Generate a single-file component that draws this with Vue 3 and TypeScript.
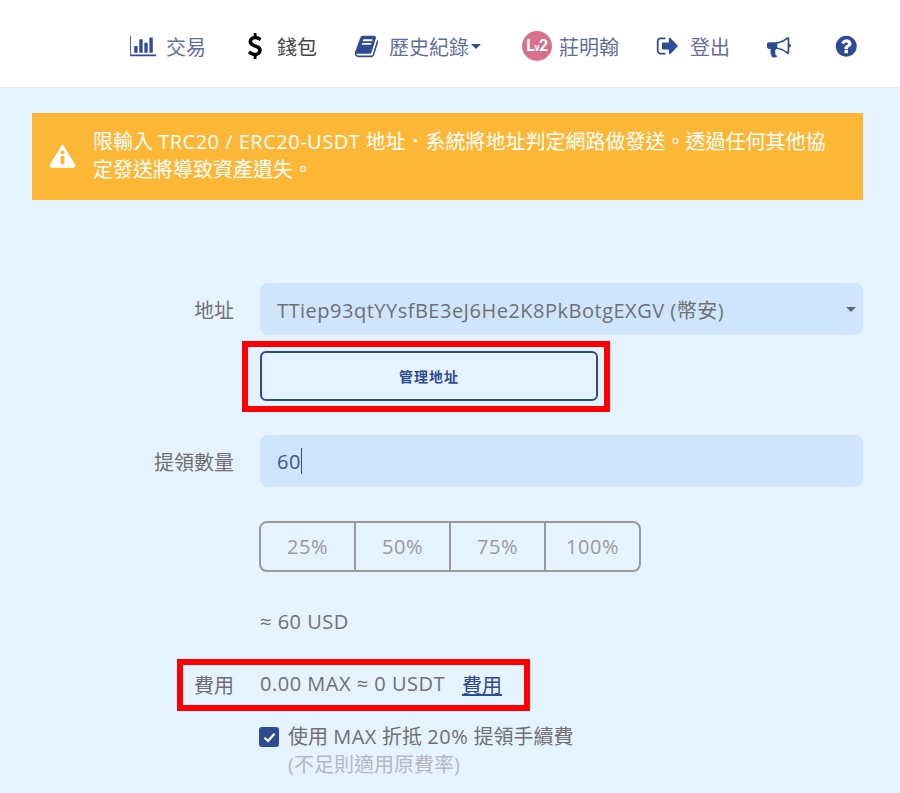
<template>
	<div class="page">
		<header class="topbar">
			<nav class="nav">
				<a class="nav-item trade">
					<svg class="ico" width="27" height="24" viewBox="0 0 2048 1792"><path :d="icons.chart"/></svg>
					<span>交易</span>
				</a>
				<a class="nav-item wallet">
					<svg class="ico" width="26" height="26" viewBox="0 0 1792 1792"><path :d="icons.dollar"/></svg>
					<span>錢包</span>
				</a>
				<a class="nav-item history">
					<svg class="ico" width="25" height="25" viewBox="0 0 1792 1792"><path :d="icons.book"/></svg>
					<span>歷史紀錄</span>
					<i class="caret"></i>
				</a>
				<a class="nav-item user">
					<span class="badge">L<small>v</small>2</span>
					<span>莊明翰</span>
				</a>
				<a class="nav-item logout">
					<svg class="ico" width="24" height="24" viewBox="0 0 1792 1792"><path :d="icons.signOut"/></svg>
					<span>登出</span>
				</a>
				<a class="nav-item horn">
					<svg class="ico" width="24" height="24" viewBox="0 0 1792 1792"><path :d="icons.bullhorn"/></svg>
				</a>
				<a class="nav-item help">
					<svg class="ico" width="24.5" height="24.5" viewBox="0 0 1792 1792"><path :d="icons.help"/></svg>
				</a>
			</nav>
		</header>

		<main class="content">
			<div class="alert">
				<svg class="alert-ico" width="27" height="24" viewBox="0 0 27 24">
					<path d="M13.5 2 L25 21 Q25.6 22.6 24 22.6 L3 22.6 Q1.4 22.6 2 21 Z" fill="#fff" stroke="#fff" stroke-width="2.4" stroke-linejoin="round"/>
					<circle cx="13.5" cy="8.6" r="2" fill="#fcb737"/>
					<rect x="11.6" y="12" width="3.8" height="8.4" fill="#fcb737"/>
				</svg>
				<p class="alert-text">限輸入 <span class="latin">TRC20 / ERC20-USDT</span> 地址．系統將地址判定網路做發送。透過任何其他協定發送將導致資產遺失。</p>
			</div>

			<form class="form" @submit.prevent>
				<div class="row">
					<label class="label">地址</label>
					<div class="field select">
						<span class="address latin">TTiep93qtYYsfBE3eJ6He2K8PkBotgEXGV (幣安)</span>
						<i class="select-caret"></i>
					</div>
				</div>
				<div class="row manage-row">
					<span></span>
					<div class="marked">
						<button class="manage-btn" type="button">管理地址</button>
						<span class="red-box box-manage"></span>
					</div>
				</div>
				<div class="row amount-row">
					<label class="label">提領數量</label>
					<div class="field amount"><span class="latin">60</span><i class="cursor"></i></div>
				</div>
				<div class="row pct-row">
					<span></span>
					<div class="pct-group">
						<button v-for="p in percents" :key="p" class="pct latin" type="button">{{ p }}%</button>
					</div>
				</div>
				<div class="row usd-row">
					<span></span>
					<div class="usd latin">≈ 60 USD</div>
				</div>
				<div class="row fee-row">
					<label class="label">費用</label>
					<div class="fee">
						<span class="latin">0.00 MAX ≈ 0 USDT</span>
						<a class="fee-link">費用</a>
					</div>
					<span class="red-box box-fee"></span>
				</div>
				<div class="row check-row">
					<span></span>
					<div class="check-wrap">
						<span class="checkbox">
							<svg width="13" height="11" viewBox="0 0 13 11"><path d="M1.5 5.8 L5 9 L11.5 1.8" fill="none" stroke="#fff" stroke-width="2.2"/></svg>
						</span>
						<div>
							<div class="check-text">使用 <span class="latin">MAX</span> 折抵 <span class="latin">20%</span> 提領手續費</div>
							<div class="check-sub">(不足則適用原費率)</div>
						</div>
					</div>
				</div>
			</form>
		</main>
	</div>
</template>

<script setup lang="ts">
const percents: number[] = [25, 50, 75, 100];

const icons = {
	chart: 'M576 896v512h-256v-512h256zm384-512v1024h-256v-1024h256zm1024 1152v128h-2048v-1536h128v1408h1920zm-640-896v768h-256v-768h256zm384-384v1152h-256v-1152h256z',
	dollar: 'M1362 1185q0 153-99.5 263.5t-258.5 136.5v175q0 14-9 23t-23 9h-135q-13 0-22.5-9.5t-9.5-22.5v-175q-66-9-127.5-31t-101.5-44.5-74-48-46.5-37.5-17.5-18q-17-21-2-41l103-135q7-10 23-12 15-2 24 9l2 2q113 99 243 125 37 8 74 8 81 0 142.5-43t61.5-122q0-28-15-53t-33.5-42-58.5-37.5-66-32-80-32.5q-39-16-61.5-25t-61.5-26.5-62.5-31-56.5-35.5-53.5-42.5-43.5-49-35.5-58-21-66.5-8.5-78q0-138 98-242t255-134v-180q0-13 9.5-22.5t22.5-9.5h135q14 0 23 9t9 23v176q57 6 110.5 23t87 33.5 63.5 37.5 39 29 15 14q17 18 5 38l-81 146q-8 15-23 16-14 3-27-7-3-3-14.5-12t-39-26.5-58.5-32-74.5-26-85.5-11.5q-95 0-155 43t-60 111q0 26 8.5 48t29.5 41.5 39.5 33 56 31 60.5 27 70 27.5q53 20 81 31.5t76 35 75.5 42.5 62 50 53 63.5 31.5 76.5 13 94z',
	book: 'M1703 478q40 57 18 129l-275 906q-19 64-76.5 107.5t-122.5 43.5h-923q-77 0-148.5-53.5t-99.5-131.5q-24-67-2-127 0-4 3-27t4-37q1-8-3-21.5t-3-19.5q2-11 8-21t16.5-23.5 16.5-23.5q23-38 45-91.5t30-91.5q3-10 .5-30t-.5-28q3-11 17-28t17-23q21-36 42-92t25-90q1-9-2.5-32t.5-28q4-13 22-30.5t22-22.5q19-26 42.5-84.5t27.5-96.5q1-8-3-25.5t-2-26.5q2-8 9-18t18-23 17-21q8-12 16.5-30.5t15-35 16-36 19.5-32 26.5-23.5 36-11.5 47.5 5.5l-1 3q38-9 51-9h761q74 0 114 56t18 130l-274 906q-36 119-71.5 153.5t-128.5 34.5h-869q-27 0-38 15-11 16-1 43 24 70 144 70h923q29 0 56-15.5t35-41.5l300-987q7-22 5-57 38 15 59 43zm-1064 2q-4 13 2 22.5t20 9.5h608q13 0 25.5-9.5t16.5-22.5l21-64q4-13-2-22.5t-20-9.5h-608q-13 0-25.5 9.5t-16.5 22.5zm-83 256q-4 13 2 22.5t20 9.5h608q13 0 25.5-9.5t16.5-22.5l21-64q4-13-2-22.5t-20-9.5h-608q-13 0-25.5 9.5t-16.5 22.5z',
	signOut: 'M704 1440q0 4 1 20t.5 26.5-3 23.5-10 19.5-20.5 6.5h-320q-119 0-203.5-84.5t-84.5-203.5v-704q0-119 84.5-203.5t203.5-84.5h320q13 0 22.5 9.5t9.5 22.5q0 4 1 20t.5 26.5-3 23.5-10 19.5-20.5 6.5h-320q-66 0-113 47t-47 113v704q0 66 47 113t113 47h312l11.5 1 11.5 3 8 5.5 7 9 2 13.5zm928-544q0 26-19 45l-544 544q-19 19-45 19t-45-19-19-45v-288h-448q-26 0-45-19t-19-45v-384q0-26 19-45t45-19h448v-288q0-26 19-45t45-19 45 19l544 544q19 19 19 45z',
	bullhorn: 'M1664 736q53 0 90.5 37.5t37.5 90.5-37.5 90.5-90.5 37.5v384q0 52-38 90t-90 38q-417-347-812-380-58 19-91 66t-31 100.5 40 92.5q-20 33-23 65.5t6 58 33.5 55 48 50 61.5 50.5q-29 58-111.5 83t-168.5 11.5-132-55.5q-7-23-29.5-87.5t-32-94.5-23-89-15-101 3.5-98.5 22-110.5h-122q-66 0-113-47t-47-113v-192q0-66 47-113t113-47h480q435 0 896-384 52 0 90 38t38 90v384zm-128 604v-954q-394 302-768 343v270q377 42 768 341z',
	help: 'M1024 1376v-192q0-14-9-23t-23-9h-192q-14 0-23 9t-9 23v192q0 14 9 23t23 9h192q14 0 23-9t9-23zm256-672q0-88-55.5-163t-138.5-116-170-41q-243 0-371 213-15 24 8 42l132 100q7 6 19 6 16 0 25-12 53-68 86-92 34-24 86-24 48 0 85.5 26t37.5 59q0 38-20 61t-68 45q-63 28-115.5 86.5t-52.5 125.5v36q0 14 9 23t23 9h192q14 0 23-9t9-23q0-19 21.5-49.5t54.5-49.5q32-18 49-28.5t46-35 44.5-48 28-60.5 12.5-81zm384 192q0 209-103 385.5t-279.5 279.5-385.5 103-385.5-103-279.5-279.5-103-385.5 103-385.5 279.5-279.5 385.5-103 385.5 103 279.5 279.5 103 385.5z'
};
</script>

<style>
html,
body {
	margin: 0;
	overflow: hidden;
}
</style>

<style scoped>
.page {
	height: 793px;
	overflow: hidden;
	background: #e5f2ff;
	font-family: "Open Sans", "Noto Sans CJK TC", sans-serif;
	font-size: 20px;
	font-weight: 400;
	color: #707070;
}

.latin {
	letter-spacing: 0.5px;
}

.topbar {
	height: 88px;
	box-sizing: border-box;
	background: #fff;
	border-bottom: 1px solid #e6ecf3;
}

.nav {
	display: flex;
	align-items: center;
	height: 92px;
	padding-left: 130px;
}

.nav-item {
	display: flex;
	align-items: center;
	gap: 10px;
	color: #5f6f9d;
	fill: #2f4b95;
	white-space: nowrap;
}

.trade {
	gap: 9px;
}

.wallet {
	margin-left: 36px;
	gap: 9px;
	color: #444;
	fill: #000;
}

.history {
	margin-left: 37px;
}

.user {
	margin-left: 41px;
	gap: 7px;
}

.logout {
	margin-left: 37px;
}

.horn {
	margin-left: 37px;
}

.help {
	margin-left: 43px;
}

.ico {
	flex: none;
}

.caret {
	width: 0;
	height: 0;
	margin-left: -8px;
	border-left: 5px solid transparent;
	border-right: 5px solid transparent;
	border-top: 5px solid #2f4b95;
}

.badge {
	display: flex;
	align-items: baseline;
	justify-content: center;
	width: 30px;
	height: 30px;
	border-radius: 50%;
	background: #d9708c;
	color: #fff;
	font-family: Roboto, sans-serif;
	font-size: 16px;
	line-height: 30px;
	font-weight: 700;
	letter-spacing: -0.5px;
}

.badge small {
	font-size: 10px;
}

.content {
	padding: 25px 37px 0 32px;
}

.alert {
	display: flex;
	align-items: center;
	gap: 17px;
	box-sizing: border-box;
	padding: 15px 20px 16px 17px;
	background: #fcb737;
	color: #fff;
}

.alert-ico {
	flex: none;
}

.alert-text {
	margin: 0;
	line-height: 28px;
}

.form {
	margin-top: 83px;
}

.row {
	position: relative;
	display: grid;
	grid-template-columns: 202px 1fr;
	column-gap: 26px;
	align-items: center;
}

.label {
	text-align: right;
}

.field {
	display: flex;
	align-items: center;
	height: 52px;
	box-sizing: border-box;
	padding: 0 17px;
	border-radius: 8px;
	background: #cfe5fd;
}

.select {
	justify-content: space-between;
	padding-right: 7px;
}

.address {
	white-space: nowrap;
}

.select-caret {
	width: 0;
	height: 0;
	border-left: 5px solid transparent;
	border-right: 5px solid transparent;
	border-top: 5px solid #666;
}

.manage-row {
	margin-top: 16px;
}

.marked {
	position: relative;
	width: 338px;
}

.manage-btn {
	display: block;
	width: 338px;
	height: 50px;
	border: 2px solid #2f4b8f;
	border-radius: 6px;
	background: transparent;
	color: #2f4b8f;
	font-family: inherit;
	font-size: 14px;
	font-weight: 700;
	letter-spacing: 1px;
}

.red-box {
	position: absolute;
	box-sizing: border-box;
	border: 6px solid #ff0000;
	pointer-events: none;
}

.box-manage {
	left: -18px;
	top: -10px;
	width: 368px;
	height: 71px;
}

.amount-row {
	margin-top: 34px;
}

.amount {
	color: #3a5598;
}

.cursor {
	width: 1px;
	height: 26px;
	background: #2f4b8f;
}

.pct-row {
	margin-top: 34px;
}

.pct-group {
	display: flex;
	width: 382px;
	height: 51px;
	box-sizing: border-box;
	margin-left: -1px;
	border: 2px solid #999;
	border-radius: 8px;
}

.pct {
	flex: 1;
	border: 0;
	border-right: 2px solid #999;
	background: transparent;
	color: #999;
	font-family: inherit;
	font-size: 20px;
	padding: 0;
}

.pct:last-child {
	border-right: 0;
}

.usd-row {
	margin-top: 36px;
}

.usd {
	line-height: 28px;
}

.fee-row {
	margin-top: 24px;
	height: 48px;
}

.fee {
	display: flex;
	gap: 17px;
}

.fee-link {
	color: #2f4b8f;
	text-decoration: underline;
}

.box-fee {
	left: 145px;
	top: -1px;
	width: 353px;
	height: 52px;
}

.check-row {
	margin-top: 15px;
}

.check-wrap {
	display: flex;
	gap: 9px;
	margin-left: -1px;
	line-height: 28px;
}

.checkbox {
	flex: none;
	display: flex;
	align-items: center;
	justify-content: center;
	width: 20px;
	height: 20px;
	margin-top: 4px;
	border-radius: 3px;
	background: #2f4b8f;
}

.check-sub {
	color: #b4b9bf;
}
</style>
